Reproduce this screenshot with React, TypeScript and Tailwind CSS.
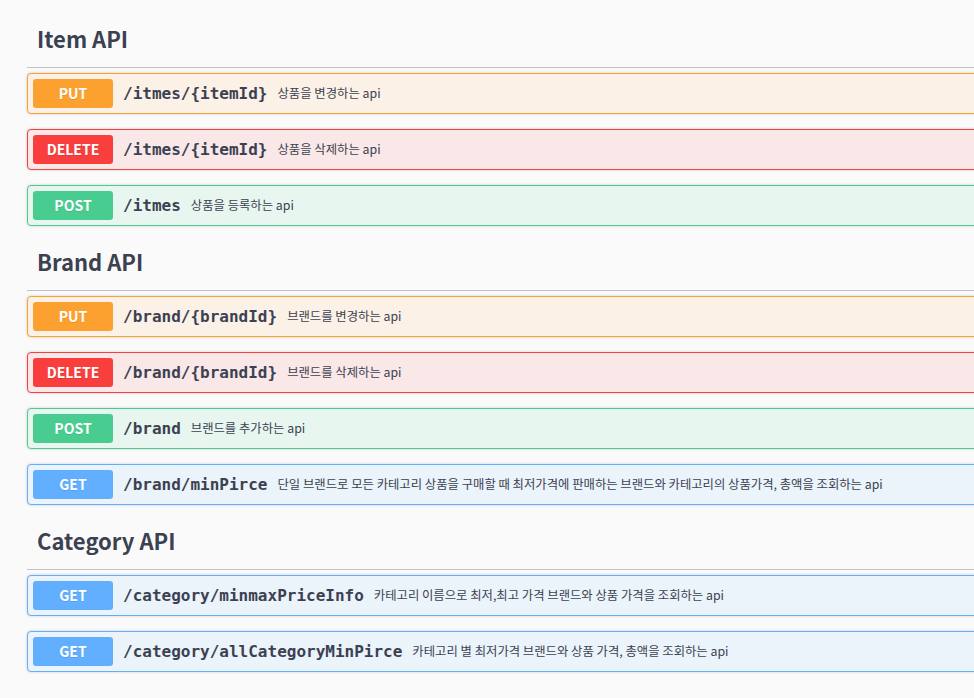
type Method = "GET" | "POST" | "PUT" | "DELETE";

type Op = { method: Method; path: string; summary: string };

type Section = { tag: string; ops: Op[] };

const sections: Section[] = [
  {
    tag: "Item API",
    ops: [
      { method: "PUT", path: "/itmes/{itemId}", summary: "상품을 변경하는 api" },
      { method: "DELETE", path: "/itmes/{itemId}", summary: "상품을 삭제하는 api" },
      { method: "POST", path: "/itmes", summary: "상품을 등록하는 api" },
    ],
  },
  {
    tag: "Brand API",
    ops: [
      { method: "PUT", path: "/brand/{brandId}", summary: "브랜드를 변경하는 api" },
      { method: "DELETE", path: "/brand/{brandId}", summary: "브랜드를 삭제하는 api" },
      { method: "POST", path: "/brand", summary: "브랜드를 추가하는 api" },
      {
        method: "GET",
        path: "/brand/minPirce",
        summary:
          "단일 브랜드로 모든 카테고리 상품을 구매할 때 최저가격에 판매하는 브랜드와 카테고리의 상품가격, 총액을 조회하는 api",
      },
    ],
  },
  {
    tag: "Category API",
    ops: [
      {
        method: "GET",
        path: "/category/minmaxPriceInfo",
        summary: "카테고리 이름으로 최저,최고 가격 브랜드와 상품 가격을 조회하는 api",
      },
      {
        method: "GET",
        path: "/category/allCategoryMinPirce",
        summary: "카테고리 별 최저가격 브랜드와 상품 가격, 총액을 조회하는 api",
      },
    ],
  },
];

// swagger-ui method colours
const styles: Record<Method, { block: string; badge: string }> = {
  PUT: { block: "border-[#fca130] bg-[#fbf1e6]", badge: "bg-[#fca130]" },
  DELETE: { block: "border-[#f93e3e] bg-[#fae7e7]", badge: "bg-[#f93e3e]" },
  POST: { block: "border-[#49cc90] bg-[#e8f6f0]", badge: "bg-[#49cc90]" },
  GET: { block: "border-[#61affe] bg-[#ebf3fb]", badge: "bg-[#61affe]" },
};

const cjk = "font-['Noto_Sans_CJK_KR','Noto_Sans',sans-serif]";

function OpBlock({ op }: { op: Op }) {
  const s = styles[op.method];
  return (
    <div
      className={`mb-[15px] flex h-[41px] items-center rounded-[4px] border p-[5px] shadow-[0_0_3px_rgba(0,0,0,0.19)] ${s.block}`}
    >
      <span
        className={`flex h-[29px] w-[80px] shrink-0 items-center justify-center rounded-[3px] text-[14px] font-bold text-white [text-shadow:0_1px_0_rgba(0,0,0,0.1)] ${cjk} ${s.badge}`}
      >
        {op.method}
      </span>
      <span className="whitespace-nowrap px-[10px] font-['DejaVu_Sans_Mono',monospace] text-[16px] font-bold text-[#3b4151]">
        {op.path}
      </span>
      <span className={`whitespace-nowrap text-[12.35px] text-[#3b4151] ${cjk}`}>
        {op.summary}
      </span>
    </div>
  );
}

export default function App() {
  return (
    <div className="min-h-[698px] w-full overflow-hidden bg-[#fafafa]">
      <div className="-mr-[40px] pl-[27px] pt-[18px]">
        {sections.map((sec) => (
          <section key={sec.tag}>
            <h3
              className={`mb-[5px] flex h-[50px] items-center border-b border-[rgba(59,65,81,0.3)] pb-[8px] pl-[10px] text-[22px] font-bold text-[#3b4151] ${cjk}`}
            >
              {sec.tag}
            </h3>
            {sec.ops.map((op) => (
              <OpBlock key={op.method + op.path} op={op} />
            ))}
          </section>
        ))}
      </div>
    </div>
  );
}
